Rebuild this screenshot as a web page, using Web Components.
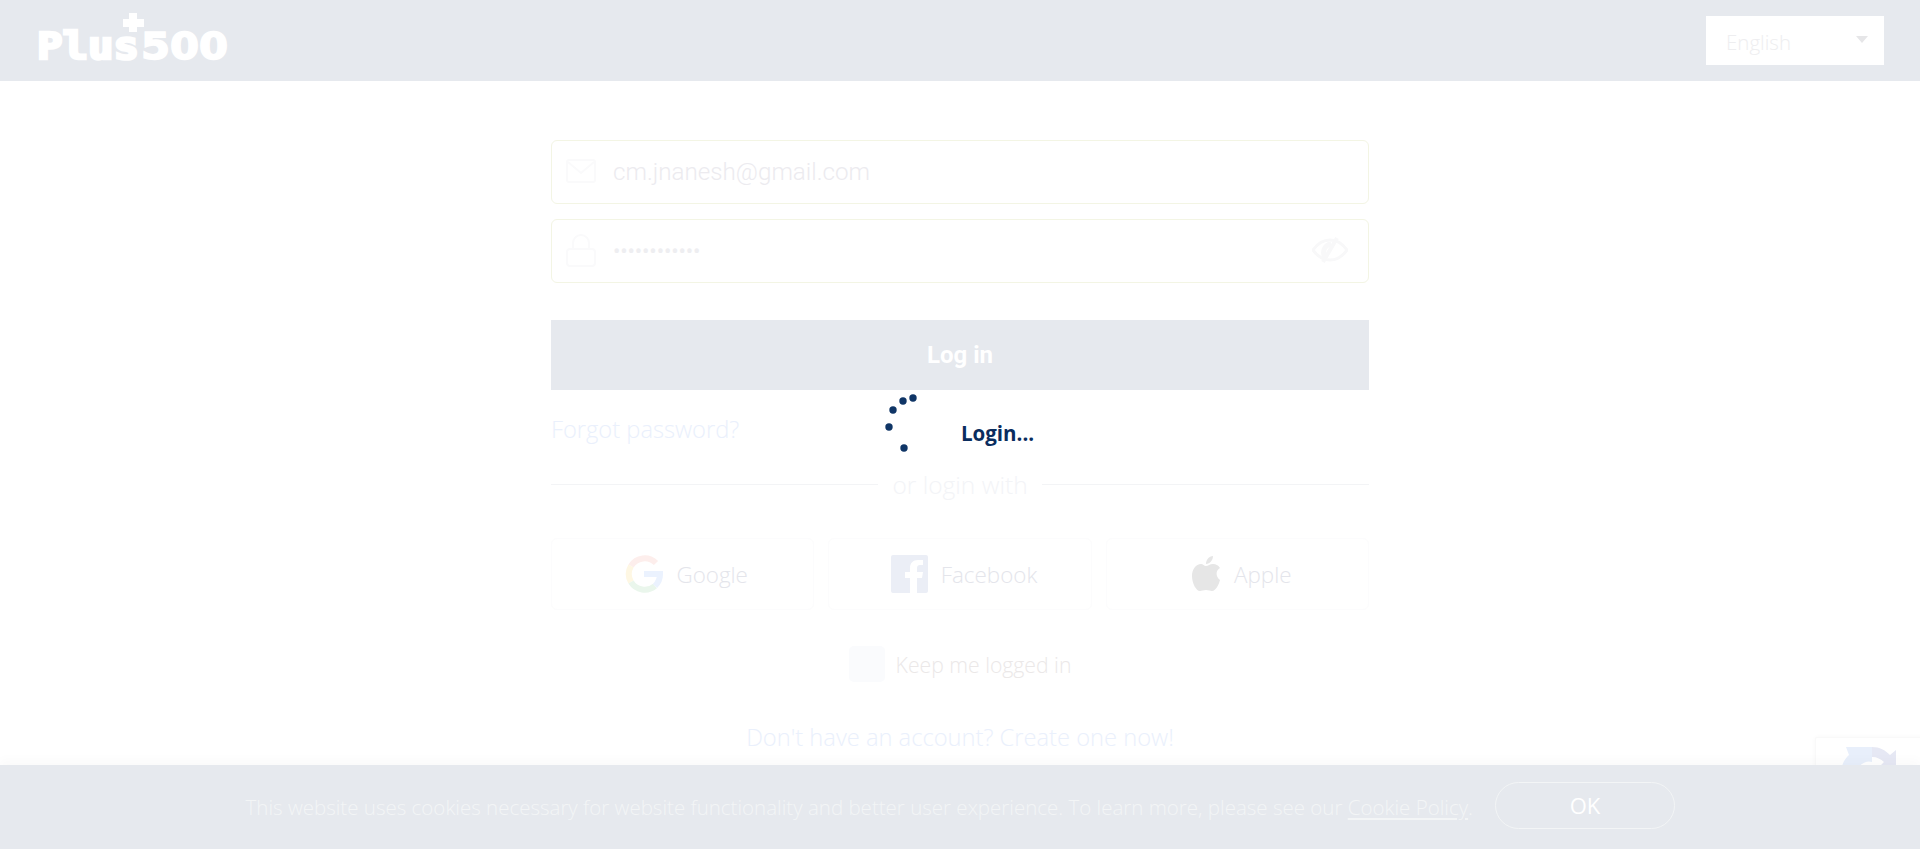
<!DOCTYPE html>
<html>
<head>
<meta charset="utf-8">
<title>Plus500</title>
<style>
  html, body { margin:0; padding:0; background:#fff; }
  body { height:849px; overflow:hidden; font-family:"Open Sans","Noto Sans",sans-serif; }
</style>
</head>
<body>
<login-page></login-page>
<script>
const shadowEl = (name, html, setup) => {
  customElements.define(name, class extends HTMLElement {
    connectedCallback() {
      const shadow = this.attachShadow({mode: 'open'});
      shadow.innerHTML = typeof html == 'function' ? html(this) : html;
      if (setup) setup(shadow, this);
    }
  });
};

shadowEl('plus-logo', `
  <style>
    :host { display:block; width:200px; height:60px; }
    svg { display:block; overflow:visible; }
    text { font-family:"DejaVu Sans",sans-serif; font-weight:700; font-size:37px; fill:#fff; stroke:#fff; stroke-width:1.6px; }
    .mono { font-family:"DejaVu Sans Mono","DejaVu Sans",sans-serif; stroke-width:2.6px; }
  </style>
  <svg width="200" height="60" viewBox="0 0 200 60">
    <text class="mono" x="0" y="51" textLength="102" lengthAdjust="spacingAndGlyphs">Plus</text>
    <text x="104" y="51" textLength="87" lengthAdjust="spacingAndGlyphs">500</text>
    <path fill="#fff" d="M92 5h8v6h7v8h-7v5h-8v-5h-6v-8h6z"/>
  </svg>
`);

shadowEl('lang-select', `
  <style>
    :host { display:flex; align-items:center; justify-content:space-between; box-sizing:border-box; width:178px; height:49px; padding:2px 16px 0 20px; background:#fff; font-size:20.5px; font-weight:300; color:#eeeef0; }
    i { display:block; width:0; height:0; margin-top:-5px; border:6px solid transparent; border-top:7px solid #e6e6e8; border-bottom:0; }
  </style>
  <span><slot></slot></span><i></i>
`);

shadowEl('top-bar', `
  <style>
    :host { display:flex; align-items:center; justify-content:space-between; height:81px; padding:0 36px 0 37px; background:#e6e9ee; flex:none; }
    plus-logo { margin-top:-5px; }
  </style>
  <plus-logo></plus-logo>
  <lang-select>English</lang-select>
`);

shadowEl('text-field', `
  <style>
    :host { display:flex; align-items:center; box-sizing:border-box; height:64px; padding:0 20px 0 14px; border:1px solid #f3f5e4; border-radius:6px; font:300 24.2px Roboto,sans-serif; color:#ecebef; }
    ::slotted(svg) { flex:none; margin-top:-2px; }
    .val { flex:1; margin-left:17px; }
  </style>
  <slot name="icon"></slot><div class="val"><slot></slot></div><slot name="end"></slot>
`);

shadowEl('or-line', `
  <style>
    :host { display:flex; align-items:center; gap:14px; font-size:24.5px; font-weight:300; line-height:30px; color:#f3f4f7; }
    i { flex:1; height:1px; background:#f3f4f6; margin-top:-2px; }
  </style>
  <i></i><span><slot></slot></span><i></i>
`);

shadowEl('social-btn', `
  <style>
    :host { display:flex; align-items:center; justify-content:center; gap:13px; flex:1; height:72px; box-sizing:border-box; padding-left:8px; border:1px solid #fcfcfd; border-radius:6px; font-size:22.4px; font-weight:300; color:#e4e5eb; }
  </style>
  <slot name="icon"></slot><span><slot></slot></span>
`);

shadowEl('keep-check', `
  <style>
    :host { display:flex; align-items:center; justify-content:center; gap:11px; font-size:21.2px; font-weight:300; color:#ebe8e8; }
    i { width:36px; height:36px; border-radius:5px; background:#fafbfd; }
  </style>
  <i></i><span><slot></slot></span>
`);

shadowEl('login-form', `
  <style>
    :host { display:flex; flex-direction:column; width:818px; margin:0 auto; padding-top:59px; }
    text-field + text-field { margin-top:15px; }
    .btn { display:flex; align-items:center; justify-content:center; height:70px; margin-top:37px; background:#e6e9ee; color:#fff; font:700 24px Roboto,sans-serif; }
    .forgot { margin-top:24px; font-size:23.7px; font-weight:300; line-height:30px; color:#eaf0fc; }
    or-line { margin-top:26px; }
    .social { display:flex; gap:14px; margin-top:38px; }
    keep-check { margin-top:36px; }
    .create { margin-top:40px; text-align:center; font-size:23.7px; font-weight:300; line-height:30px; color:#eaf0fc; }
  </style>
  <text-field>
    <svg slot="icon" width="30" height="24" viewBox="0 0 30 24" fill="none" stroke="#fafafb" stroke-width="2"><rect x="1" y="1" width="28" height="22" rx="2"/><path d="M2 3l13 11L28 3"/></svg>
    cm.jnanesh@gmail.com
  </text-field>
  <text-field>
    <svg slot="icon" width="30" height="33" viewBox="0 0 30 33" fill="none" stroke="#fafafb" stroke-width="2"><rect x="1" y="15" width="28" height="17" rx="3"/><path d="M7 15V9a8 8 0 0 1 16 0v6"/></svg>
    <span style="font-size:22px;font-weight:400;letter-spacing:-.15px;color:#eeeef1">••••••••••••</span>
    <svg slot="end" width="36" height="26" viewBox="0 0 36 26" fill="none" stroke="#f8f8f9" stroke-width="3"><path d="M1 13C6 6 11 3 18 3s12 3 17 10c-5 7-10 10-17 10S6 20 1 13z"/><path d="M13 21c-3-6-1-13 6-14" stroke-width="5"/><path d="M25 1L11 25" stroke-width="4"/></svg>
  </text-field>
  <div class="btn">Log in</div>
  <div class="forgot">Forgot password?</div>
  <or-line>or login with</or-line>
  <div class="social">
    <social-btn>
      <svg slot="icon" width="38" height="38" viewBox="0 0 38 38" fill="none" stroke-width="6"><path d="M31 8A16 16 0 0 0 6 11" stroke="#fdeeec"/><path d="M6 11a16 16 0 0 0 0 16" stroke="#fef7e3"/><path d="M6 27a16 16 0 0 0 24 4" stroke="#eaf6ec"/><path d="M30 31c3-3 5-7 5-12H19" stroke="#ebf2fe"/></svg>
      Google
    </social-btn>
    <social-btn>
      <svg slot="icon" width="37" height="38" viewBox="0 0 37 38"><path fill="#ebeef6" d="M2 0h33a2 2 0 0 1 2 2v34a2 2 0 0 1-2 2h-9V23h5l1-6h-6v-4c0-2 1-3 3-3h3V5h-5c-5 0-8 3-8 8v4h-5v6h5v15H2a2 2 0 0 1-2-2V2a2 2 0 0 1 2-2z"/></svg>
      Facebook
    </social-btn>
    <social-btn>
      <svg slot="icon" width="30" height="36" viewBox="0 0 30 36"><path fill="#e6e6e6" d="M15 10c2 0 4-2 7-2 3 0 5 1 7 4-4 2-5 8 0 12-1 4-4 11-8 11-2 0-3-1-6-1s-4 1-6 1C5 35 1 27 1 20 1 13 5 8 10 8c2 0 3 2 5 2zM15 8c0-4 3-8 7-8 0 4-3 8-7 8z"/></svg>
      Apple
    </social-btn>
  </div>
  <keep-check>Keep me logged in</keep-check>
  <div class="create">Don't have an account? Create one now!</div>
`);

shadowEl('login-spinner', `
  <style>
    :host { position:absolute; left:885px; top:392px; display:flex; align-items:flex-start; font-size:20.5px; font-weight:700; color:#0a2d5e; }
    svg { display:block; }
    span { position:absolute; left:76px; top:28px; line-height:26px; white-space:nowrap; }
  </style>
  <svg width="36" height="62" viewBox="0 0 36 62" fill="#0f3566">
    <circle cx="28" cy="6" r="3.7"/><circle cx="18" cy="9" r="3.7"/><circle cx="8" cy="18" r="3.7"/><circle cx="4" cy="35" r="3.7"/><circle cx="19" cy="56" r="3.7"/>
  </svg>
  <span>Login...</span>
`);

shadowEl('recaptcha-badge', `
  <style>
    :host { position:absolute; left:1815px; top:737px; width:110px; height:60px; box-sizing:border-box; border:1px solid #f9f9f9; border-radius:2px; background:#fff; box-shadow:0 0 5px rgba(0,0,0,.03); }
    svg { display:block; margin:9px 0 0 26px; }
  </style>
  <svg width="56" height="30" viewBox="0 0 56 30"><path fill="#e8effb" d="M4 0h26v15a12 12 0 0 0-13 5L0 20C1 14 4 11 7 8z"/><path fill="#e6e8f4" d="M30 0c8 0 13 3 18 8l6-5v17H37l5-5c-3-3-7-5-12-5z"/></svg>
`);

shadowEl('cookie-bar', `
  <style>
    :host { display:flex; align-items:center; justify-content:flex-end; gap:22px; flex:none; position:relative; height:84px; padding-right:245px; background:#e6e9ee; color:#f3f5f6; font-size:20.5px; font-weight:300; box-shadow:0 -6px 10px rgba(0,0,0,.02); }
    .ok { display:flex; align-items:center; justify-content:center; box-sizing:border-box; width:180px; height:47px; margin-top:-4px; border:1px solid #f3f5f6; border-radius:24px; color:#fff; font-size:22px; font-weight:400; }
  </style>
  <div><slot></slot></div>
  <div class="ok">OK</div>
`);

shadowEl('login-page', `
  <style>
    :host { display:flex; flex-direction:column; position:relative; height:849px; overflow:hidden; }
    main { flex:1; min-height:0; }
  </style>
  <top-bar></top-bar>
  <main><login-form></login-form></main>
  <recaptcha-badge></recaptcha-badge>
  <cookie-bar>This website uses cookies necessary for website functionality and better user experience. To learn more, please see our <u style="text-underline-offset:3px">Cookie Policy</u>.</cookie-bar>
  <login-spinner></login-spinner>
`);
</script>
</body>
</html>
